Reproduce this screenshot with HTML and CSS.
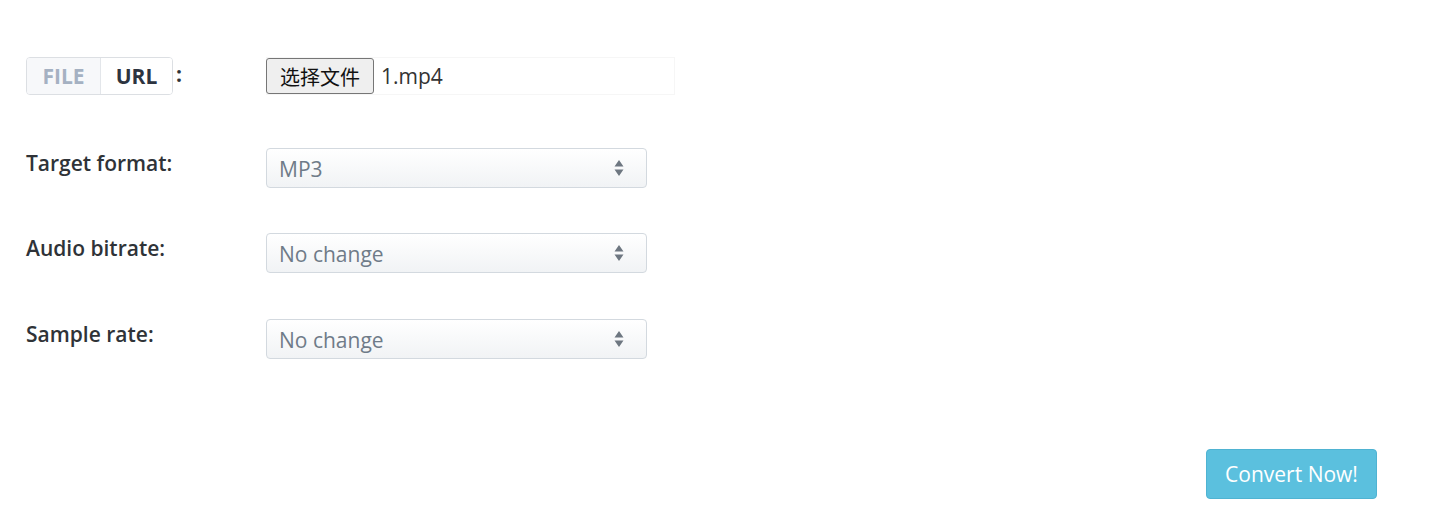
FILE: index.html
```html
<!DOCTYPE html>
<html lang="en">
<head>
<meta charset="utf-8">
<title>Convert</title>
<link rel="stylesheet" href="styles.css">
</head>
<body>
<form class="converter">
  <div class="row row-source">
    <div class="label-cell">
      <div class="toggle">
        <span class="toggle-item toggle-off">FILE</span>
        <span class="toggle-item toggle-on">URL</span>
      </div>
      <span class="colon">:</span>
    </div>
    <div class="file-box">
      <span class="file-btn">选择文件</span>
      <span class="file-name">1.mp4</span>
    </div>
  </div>
  <div class="row">
    <div class="label">Target format:</div>
    <div class="select"><span class="select-value">MP3</span><span class="arrows"><svg width="10" height="18" viewBox="0 0 10 18"><path d="M5 1 L9.5 7.5 H0.5 Z M5 17 L9.5 10.5 H0.5 Z" fill="#6e7781"/></svg></span></div>
  </div>
  <div class="row">
    <div class="label">Audio bitrate:</div>
    <div class="select"><span class="select-value">No change</span><span class="arrows"><svg width="10" height="18" viewBox="0 0 10 18"><path d="M5 1 L9.5 7.5 H0.5 Z M5 17 L9.5 10.5 H0.5 Z" fill="#6e7781"/></svg></span></div>
  </div>
  <div class="row row-last">
    <div class="label">Sample rate:</div>
    <div class="select"><span class="select-value">No change</span><span class="arrows"><svg width="10" height="18" viewBox="0 0 10 18"><path d="M5 1 L9.5 7.5 H0.5 Z M5 17 L9.5 10.5 H0.5 Z" fill="#6e7781"/></svg></span></div>
  </div>
  <div class="actions">
    <span class="convert-btn">Convert Now!</span>
  </div>
</form>
</body>
</html>
```
FILE: styles.css
```css
html, body {
  margin: 0;
  padding: 0;
  background: #ffffff;
}
body {
  font-family: "Open Sans", "Noto Sans CJK SC", sans-serif;
  color: #2f3338;
}
.converter {
  padding: 57px 68px 0 26px;
  display: flex;
  flex-direction: column;
}
.row {
  display: grid;
  grid-template-columns: 240px 1fr;
  align-items: start;
  margin-bottom: 45px;
}
.row-source {
  margin-bottom: 53px;
}
.row-last {
  margin-top: 1px;
}
.label-cell {
  display: flex;
  align-items: center;
  height: 38px;
}
.toggle {
  display: flex;
  border: 1px solid #dcdfe3;
  border-radius: 4px;
  height: 36px;
  overflow: hidden;
}
.toggle-item {
  display: flex;
  align-items: center;
  justify-content: center;
  font-size: 21px;
  font-weight: 700;
}
.toggle-off {
  width: 73px;
  color: #a5b1c2;
  background: #f7f8fa;
  border-right: 1px solid #e3e6ea;
}
.toggle-on {
  width: 71px;
  color: #2d3440;
  background: #ffffff;
}
.colon {
  font-size: 21px;
  font-weight: 700;
  margin-left: 3px;
  margin-top: -4px;
}
.file-box {
  width: 407px;
  height: 36px;
  border: 1px solid #f6f6f6;
  display: flex;
  align-items: center;
}
.file-btn {
  box-sizing: border-box;
  height: 36px;
  width: 108px;
  margin-left: -1px;
  display: flex;
  align-items: center;
  justify-content: center;
  font-family: "Noto Sans CJK SC", sans-serif;
  font-size: 20px;
  color: #111;
  background: #efefef;
  border: 1px solid #767676;
  border-radius: 3px;
}
.file-name {
  font-size: 21px;
  color: #333;
  margin-left: 7px;
}
.label {
  font-size: 21px;
  font-weight: 600;
  line-height: 31px;
  color: #2f3338;
}
.select {
  box-sizing: border-box;
  width: 381px;
  height: 40px;
  border: 1px solid #d3d9df;
  border-radius: 4px;
  background: linear-gradient(#ffffff, #f1f3f5);
  display: flex;
  align-items: center;
  justify-content: space-between;
  padding: 0 22px 0 12px;
}
.select-value {
  font-size: 21px;
  color: #6f7b88;
  margin-top: 1px;
}
.arrows {
  display: flex;
  align-items: center;
}
.actions {
  display: flex;
  justify-content: flex-end;
  margin-top: 45px;
}
.convert-btn {
  box-sizing: border-box;
  width: 171px;
  height: 50px;
  border-radius: 4px;
  background: #5bc0de;
  border: 1px solid #4fb3d2;
  color: #ffffff;
  font-size: 21px;
  display: flex;
  align-items: center;
  justify-content: center;
}
```
